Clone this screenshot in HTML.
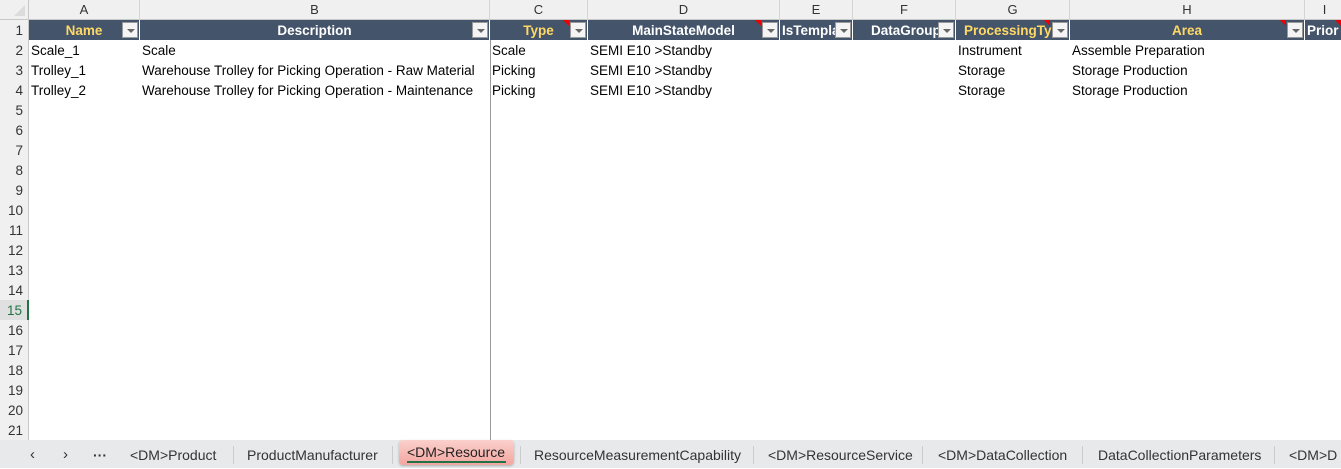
<!DOCTYPE html>
<html><head><meta charset="utf-8"><style>
*{margin:0;padding:0;box-sizing:border-box}
body{width:1341px;height:468px;overflow:hidden;background:#fff;font-family:"Liberation Sans",sans-serif;font-size:13.5px;color:#000;position:relative}
.a{position:absolute;white-space:nowrap}
.colh{top:0;height:20px;background:#f0f0f0;border-right:1px solid #d4d4d4;border-bottom:1px solid #c8c8c8;text-align:center;line-height:19px;color:#333;font-size:13px}
.rowh{left:0;width:29px;height:20px;background:#f0f0f0;border-right:1px solid #c8c8c8;text-align:right;padding-right:5px;line-height:22px;color:#333}
.hd{top:20px;height:20px;background:#44546a;border-right:1px solid #fff;color:#fff;font-weight:bold;text-align:center;line-height:21px;overflow:hidden}
.y{color:#ffd966}
.dd{position:absolute;top:2px;right:1px;width:16px;height:16px;background:#f4f4f4;border:1px solid #999}
.dd:after{content:"";position:absolute;left:4px;top:6px;border-left:4px solid transparent;border-right:4px solid transparent;border-top:4px solid #666}
.red{position:absolute;top:0;width:0;height:0;border-left:6px solid transparent;border-top:6px solid #e00}
.c{line-height:22px;height:20px;padding-left:2px}
.tab{top:441px;height:28px;line-height:28px;color:#333;font-size:14px}
.sep{position:absolute;top:446px;width:1px;height:18px;background:#ccc}
</style></head><body>
<div class="a" style="left:0;top:0;width:29px;height:20px;background:#f0f0f0;border-right:1px solid #c8c8c8;border-bottom:1px solid #c8c8c8"><div style="position:absolute;right:3px;bottom:3px;width:0;height:0;border-left:11px solid transparent;border-bottom:11px solid #dcdcdc"></div></div>
<div class="a colh" style="left:29px;width:111px">A</div>
<div class="a colh" style="left:140px;width:350px">B</div>
<div class="a colh" style="left:490px;width:98px">C</div>
<div class="a colh" style="left:588px;width:192px">D</div>
<div class="a colh" style="left:780px;width:73px">E</div>
<div class="a colh" style="left:853px;width:103px">F</div>
<div class="a colh" style="left:956px;width:114px">G</div>
<div class="a colh" style="left:1070px;width:235px">H</div>
<div class="a colh" style="left:1305px;width:40px">I</div>

<div class="a hd" style="left:29px;width:111px"><span class="y">Name</span><div class="dd"></div></div>
<div class="a hd" style="left:140px;width:350px">Description<div class="dd"></div></div>
<div class="a hd" style="left:490px;width:98px"><span class="y">Type</span><div class="red" style="left:73px"></div><div class="dd"></div></div>
<div class="a hd" style="left:588px;width:192px">MainStateModel<div class="red" style="left:167px"></div><div class="dd"></div></div>
<div class="a hd" style="left:780px;width:73px;text-align:left;padding-left:2px">IsTempla<div class="dd"></div></div>
<div class="a hd" style="left:853px;width:103px;text-align:left;padding-left:18px">DataGroup<div class="dd"></div></div>
<div class="a hd" style="left:956px;width:114px;text-align:left;padding-left:8px"><span class="y">ProcessingTyp</span><div class="red" style="left:88px"></div><div class="dd"></div></div>
<div class="a hd" style="left:1070px;width:235px"><span class="y">Area</span><div class="red" style="left:210px"></div><div class="dd"></div></div>
<div class="a hd" style="left:1305px;width:40px;text-align:left;padding-left:2px">Prior<div class="red" style="left:30px"></div></div>

<div class="a" style="left:490px;top:40px;width:1px;height:400px;background:#9a9a9a"></div>

<div class="a rowh" style="top:20px">1</div>
<div class="a rowh" style="top:40px">2</div>
<div class="a rowh" style="top:60px">3</div>
<div class="a rowh" style="top:80px">4</div>
<div class="a rowh" style="top:100px">5</div>
<div class="a rowh" style="top:120px">6</div>
<div class="a rowh" style="top:140px">7</div>
<div class="a rowh" style="top:160px">8</div>
<div class="a rowh" style="top:180px">9</div>
<div class="a rowh" style="top:200px">10</div>
<div class="a rowh" style="top:220px">11</div>
<div class="a rowh" style="top:240px">12</div>
<div class="a rowh" style="top:260px">13</div>
<div class="a rowh" style="top:280px">14</div>
<div class="a rowh" style="top:300px;background:#e0e0e0;color:#217346;border-right:2px solid #217346">15</div>
<div class="a rowh" style="top:320px">16</div>
<div class="a rowh" style="top:340px">17</div>
<div class="a rowh" style="top:360px">18</div>
<div class="a rowh" style="top:380px">19</div>
<div class="a rowh" style="top:400px">20</div>
<div class="a rowh" style="top:420px">21</div>

<div class="a c" style="left:29px;top:40px">Scale_1</div>
<div class="a c" style="left:140px;top:40px">Scale</div>
<div class="a c" style="left:490px;top:40px">Scale</div>
<div class="a c" style="left:588px;top:40px">SEMI E10 &gt;Standby</div>
<div class="a c" style="left:956px;top:40px">Instrument</div>
<div class="a c" style="left:1070px;top:40px">Assemble Preparation</div>

<div class="a c" style="left:29px;top:60px">Trolley_1</div>
<div class="a c" style="left:140px;top:60px">Warehouse Trolley for Picking Operation - Raw Material</div>
<div class="a c" style="left:490px;top:60px">Picking</div>
<div class="a c" style="left:588px;top:60px">SEMI E10 &gt;Standby</div>
<div class="a c" style="left:956px;top:60px">Storage</div>
<div class="a c" style="left:1070px;top:60px">Storage Production</div>

<div class="a c" style="left:29px;top:80px">Trolley_2</div>
<div class="a c" style="left:140px;top:80px">Warehouse Trolley for Picking Operation - Maintenance</div>
<div class="a c" style="left:490px;top:80px">Picking</div>
<div class="a c" style="left:588px;top:80px">SEMI E10 &gt;Standby</div>
<div class="a c" style="left:956px;top:80px">Storage</div>
<div class="a c" style="left:1070px;top:80px">Storage Production</div>

<div class="a" style="left:0;top:440px;width:1341px;height:28px;background:#e8e9eb"></div>
<div class="a tab" style="left:30px;font-size:15px">&#8249;</div>
<div class="a tab" style="left:63px;font-size:15px">&#8250;</div>
<div class="a tab" style="left:93px;font-weight:bold">&middot;&middot;&middot;</div>
<div class="a tab" style="left:130px">&lt;DM&gt;Product</div>
<div class="sep" style="left:233px"></div>
<div class="a tab" style="left:247px">ProductManufacturer</div>
<div class="sep" style="left:392px"></div>
<div class="a" style="left:399px;top:440px;width:115px;height:25px;background:linear-gradient(#fbd0cc,#f3a6a0);border-radius:4px;box-shadow:0 1px 2px rgba(0,0,0,.25)"></div>
<div class="a tab" style="left:407px;top:438px;color:#222">&lt;DM&gt;Resource</div>
<div class="a" style="left:407px;top:461px;width:99px;height:2px;background:#217346"></div>
<div class="sep" style="left:520px"></div>
<div class="a tab" style="left:534px">ResourceMeasurementCapability</div>
<div class="sep" style="left:753px"></div>
<div class="a tab" style="left:768px">&lt;DM&gt;ResourceService</div>
<div class="sep" style="left:922px"></div>
<div class="a tab" style="left:938px">&lt;DM&gt;DataCollection</div>
<div class="sep" style="left:1082px"></div>
<div class="a tab" style="left:1098px">DataCollectionParameters</div>
<div class="sep" style="left:1274px"></div>
<div class="a tab" style="left:1289px">&lt;DM&gt;D</div>
</body></html>
